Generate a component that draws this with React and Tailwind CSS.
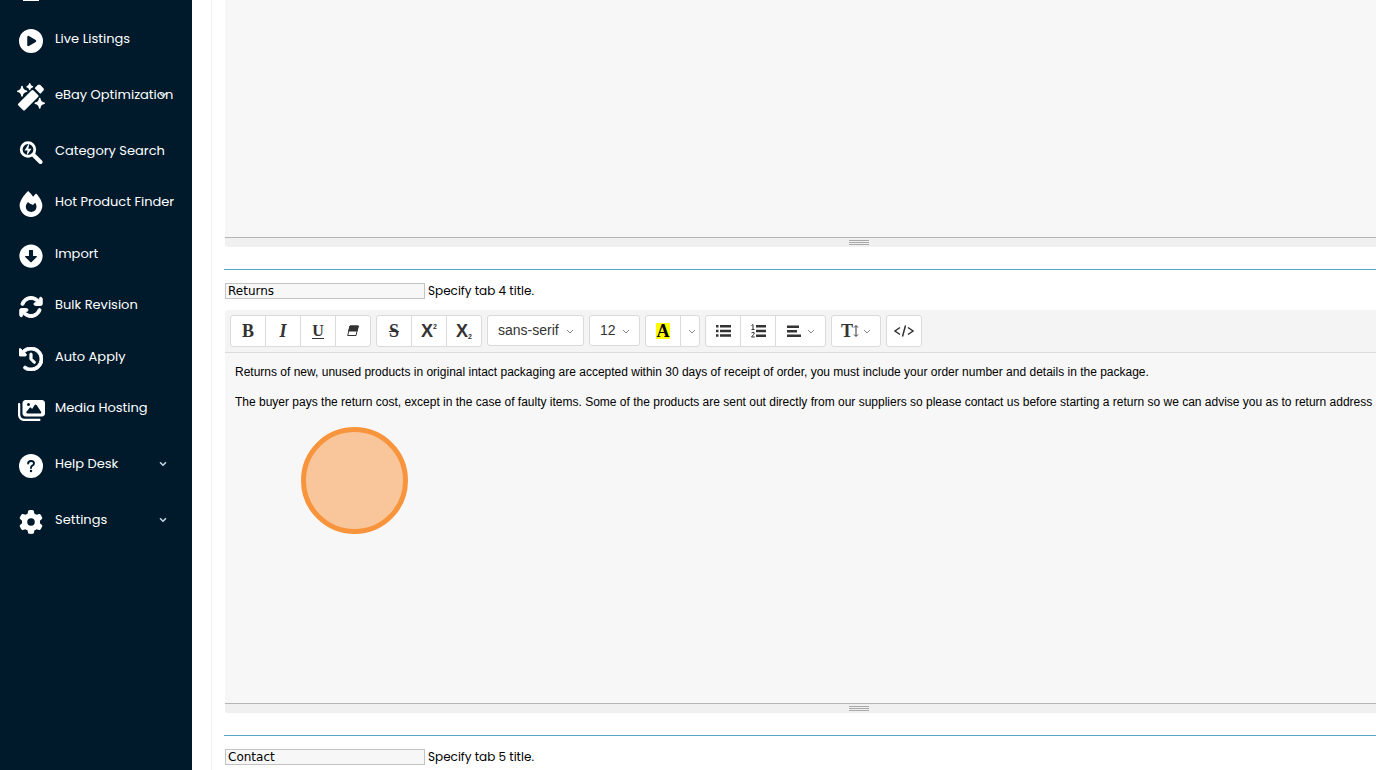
import React from 'react';
import {
  FaCirclePlay,
  FaArrowsRotate,
  FaClockRotateLeft,
  FaImages,
  FaGear,
} from 'react-icons/fa6';
import { FaArrowAltCircleDown } from 'react-icons/fa';
import { ChevronDown } from 'lucide-react';

const WandIcon = () => (
  <svg width="28" height="28" viewBox="0 0 28 28" fill="#fff" stroke="#fff" strokeLinejoin="round">
    <path d="M15.5 8.500L20 13L7 26L2.500 21.500Z" strokeWidth="3" />
    <path d="M18.800 5.200L21.300 2.700Q22 2.300 22.700 2.700L25.800 5.800Q26.200 6.400 25.800 7L23.300 9.700Z" strokeWidth="1.800" />
    <path d="M5 3.500Q5.500 7.500 9.500 8.300Q5.500 9 5 13Q4.500 9 0.800 8.300Q4.500 7.500 5 3.500Z" strokeWidth="1.600" />
    <path d="M12.700 0.800Q13 3.300 15.500 3.700Q13 4 12.700 6.500Q12.400 4 10 3.700Q12.400 3.300 12.700 0.800Z" strokeWidth="1.400" />
    <path d="M22.700 15.500Q23.200 19.500 27.200 20.200Q23.200 21 22.700 25Q22.200 21 18.300 20.200Q22.200 19.500 22.700 15.500Z" strokeWidth="1.600" />
  </svg>
);

const SearchIcon = () => (
  <svg width="24" height="24" viewBox="0 0 24 24" fill="none" stroke="#fff">
    <circle cx="9" cy="8.500" r="6.800" strokeWidth="2.800" />
    <path d="M14.500 14L21.500 21" strokeWidth="4" strokeLinecap="round" />
    <path d="M10.500 1.500L5.500 9.500H8.600L7.500 15L12.500 7.800H9.300Z" fill="#fff" stroke="none" />
  </svg>
);

const FlameIcon = () => (
  <svg width="24" height="26" viewBox="0 0 448 512" fill="#fff">
    <path
      fillRule="evenodd"
      d="M323.560 51.200c-20.800 19.300-39.580 39.590-56.220 59.970C240.080 73.620 206.280 35.530 168 0 69.740 91.170 0 209.960 0 281.600 0 408.850 100.290 512 224 512s224-103.150 224-230.400c0-53.270-51.980-163.140-124.440-230.400zM165 215C140 245 122 275 122 310C122 368 168 412 228 412C288 412 332 370 332 310C332 280 322 258 306 232L262 275C242 262 200 258 165 215z"
    />
  </svg>
);

const HelpIcon = () => (
  <svg width="24" height="24" viewBox="0 0 25 25" fill="none">
    <circle cx="12.500" cy="12.500" r="12.500" fill="#fff" />
    <path d="M9.500 10Q9.500 7.300 12.500 7.300Q15.600 7.300 15.600 9.800Q15.600 11.300 13.800 12.200Q12.500 12.900 12.500 14.600" stroke="#001a2c" strokeWidth="2" strokeLinecap="round" />
    <circle cx="12.500" cy="17.800" r="1.300" fill="#001a2c" />
  </svg>
);

const topLinks = [
  { label: 'Live Listings', icon: <FaCirclePlay size={24} /> },
  { label: 'eBay Optimization', icon: <WandIcon />, menu: true },
];

const toolLinks = [
  { label: 'Category Search', icon: <SearchIcon /> },
  { label: 'Hot Product Finder', icon: <FlameIcon /> },
  { label: 'Import', icon: <FaArrowAltCircleDown size={24} /> },
  { label: 'Bulk Revision', icon: <FaArrowsRotate size={24} stroke="#fff" strokeWidth={20} /> },
  { label: 'Auto Apply', icon: <FaClockRotateLeft size={24} stroke="#fff" strokeWidth={20} /> },
  { label: 'Media Hosting', icon: <FaImages size={27} /> },
];

const bottomLinks = [
  { label: 'Help Desk', icon: <HelpIcon />, menu: true },
  { label: 'Settings', icon: <FaGear size={24} />, menu: true },
];

const NavItem = ({ label, icon, menu, className }) => (
  <li className={className}>
    <a href="#" className="relative flex h-full items-center pl-4 text-white">
      <span className="flex w-[30px] shrink-0 justify-center">{icon}</span>
      <span className="whitespace-nowrap pb-1 pl-[9px] text-[13px] leading-5">{label}</span>
      {menu && (
        <span className="absolute right-6 flex pb-1 text-[#c3d3dd]">
          <ChevronDown size={10} strokeWidth={4} />
        </span>
      )}
    </a>
  </li>
);

const Sidebar = () => (
  <nav className="flex w-48 shrink-0 flex-col gap-0.5 bg-[#001a2c] font-['Poppins','Inter',sans-serif]">
    <div className="flex h-[11px] pl-[23px]">
      <span className="h-px w-4 bg-white" />
    </div>
    <ul>
      {topLinks.map((item) => (
        <NavItem key={item.label} {...item} className="h-14" />
      ))}
    </ul>
    <ul className="flex h-[309px] flex-col">
      {toolLinks.map((item) => (
        <NavItem key={item.label} {...item} className="flex-1" />
      ))}
    </ul>
    <ul>
      {bottomLinks.map((item) => (
        <NavItem key={item.label} {...item} className="h-14" />
      ))}
    </ul>
  </nav>
);

const Caret = () => (
  <svg width="8" height="8" viewBox="0 0 8 8" fill="none" stroke="#888" strokeWidth="1">
    <path d="M1 3 L4 6 L7 3" />
  </svg>
);

// neighbouring buttons share one border
const Group = ({ children }) => <div className="flex h-8 pl-px">{children}</div>;

const ToolButton = ({ label, className = 'w-9', children }) => (
  <button
    type="button"
    aria-label={label}
    className={`${className} -ml-px flex items-center justify-center border border-[#dadada] bg-white first:rounded-l-[3px] last:rounded-r-[3px]`}
  >
    {children}
  </button>
);

const ToolSelect = ({ label, value, className }) => (
  <div className="relative flex h-[31px] items-center">
    <select
      aria-label={label}
      defaultValue={value}
      className={`${className} h-[31px] appearance-none rounded-[3px] border border-[#dadada] bg-white pb-px pl-2.5 text-sm text-[#333] outline-none`}
    >
      <option>{value}</option>
    </select>
    <span className="pointer-events-none absolute right-2.5">
      <Caret />
    </span>
  </div>
);

const Toolbar = () => (
  <div className="flex gap-[5px] rounded-t-[3px] border-b border-[#dcdcdc] bg-[#f4f4f4] p-[5px] font-['Liberation_Sans',Arial,sans-serif] text-[#333]">
    <Group>
      <ToolButton label="Bold">
        <span className="font-['Liberation_Serif',serif] text-lg font-bold leading-5">B</span>
      </ToolButton>
      <ToolButton label="Italic">
        <span className="font-['Liberation_Serif',serif] text-lg font-bold italic leading-5">I</span>
      </ToolButton>
      <ToolButton label="Underline">
        <span className="border-b border-[#333] font-['Liberation_Serif',serif] text-base font-bold leading-[14px]">U</span>
      </ToolButton>
      <ToolButton label="Remove formatting">
        <svg width="12" height="12" viewBox="0 0 12 12">
          <path d="M3 1 H11.300 L9 10.500 H0.700 Z" fill="#fff" stroke="#333" strokeLinejoin="round" />
          <path d="M3 1 H11.300 L10 6 H1.800 Z" fill="#333" stroke="#333" strokeLinejoin="round" />
        </svg>
      </ToolButton>
    </Group>
    <Group>
      <ToolButton label="Strikethrough">
        <span className="font-['Liberation_Serif',serif] text-lg font-bold leading-5 line-through">S</span>
      </ToolButton>
      <ToolButton label="Superscript">
        <span className="text-lg font-bold leading-5">X</span>
        <span className="pb-2 text-[7px] font-bold leading-3">2</span>
      </ToolButton>
      <ToolButton label="Subscript">
        <span className="text-lg font-bold leading-5">X</span>
        <span className="pt-3 text-[7px] font-bold leading-3">2</span>
      </ToolButton>
    </Group>
    <ToolSelect label="Font family" value="sans-serif" className="w-[97px]" />
    <ToolSelect label="Font size" value="12" className="w-[51px]" />
    <Group>
      <ToolButton label="Highlight colour">
        <span className="w-3.5 bg-[#ffff00] text-center font-['Liberation_Serif',serif] text-lg font-bold leading-4 text-black">A</span>
      </ToolButton>
      <ToolButton label="More colours" className="w-5 pl-1">
        <Caret />
      </ToolButton>
    </Group>
    <Group>
      <ToolButton label="Bulleted list">
        <svg width="15" height="12" viewBox="0 0 15 12" fill="#333">
          <path d="M0 0h2.500v2.500H0zM0 4.700h2.500v2.500H0zM0 9.300h2.500v2.500H0zM4 0H15v2.500H4zM4 4.700H15v2.500H4zM4 9.300H15v2.500H4z" />
        </svg>
      </ToolButton>
      <ToolButton label="Numbered list">
        <svg width="15" height="14" viewBox="0 0 15 14" fill="#333">
          <path d="M5 1h10v2.600H5zM5 5.700h10v2.600H5zM5 10.400h10v2.600H5z" />
          <path d="M0.500 1.500 L2 0.500 V5.500 M0.500 5.500 H3.500 M0.500 9 Q2 7.500 3.300 8.800 Q3.500 10 0.500 13 H3.800" fill="none" stroke="#333" />
        </svg>
      </ToolButton>
      <ToolButton label="Alignment" className="w-[51px] gap-1.5">
        <svg width="14" height="12" viewBox="0 0 14 12" fill="#333">
          <path d="M0 0.500h12v2.500H0zM0 5h10v2.500H0zM0 9.500h14v2.500H0z" />
        </svg>
        <Caret />
      </ToolButton>
    </Group>
    <Group>
      <ToolButton label="Line height" className="w-[50px] gap-1">
        <span className="flex items-center">
          <span className="font-['Liberation_Serif',serif] text-lg font-bold leading-5">T</span>
          <svg width="6" height="12" viewBox="0 0 6 12" fill="none" stroke="#333">
            <path d="M3 1V11M1 2.500L3 0.500L5 2.500M1 9.500L3 11.500L5 9.500" />
          </svg>
        </span>
        <Caret />
      </ToolButton>
    </Group>
    <Group>
      <ToolButton label="Code view">
        <svg width="20" height="12" viewBox="0 0 20 12" fill="none" stroke="#333" strokeWidth="1.500">
          <path d="M6 2.500L1 6L6 9.500M11.500 0.500L8.500 11.500M14 2.500L19 6L14 9.500" />
        </svg>
      </ToolButton>
    </Group>
  </div>
);

const ResizeBar = () => (
  <div className="flex h-2.5 cursor-ns-resize flex-col items-center gap-px rounded-b-[3px] border-t border-[#b5b5b5] bg-[#f0f0f0] pt-0.5">
    <span className="h-px w-5 bg-[#a9a9a9]" />
    <span className="h-px w-5 bg-[#a9a9a9]" />
    <span className="h-px w-5 bg-[#a9a9a9]" />
  </div>
);

const TabTitle = ({ number, value }) => (
  <div className="mt-[22px] border-t border-t-[#55a6c4] pl-px pt-[13px]">
    <div className="flex h-4 items-center gap-[3px]">
      <input
        id={`tab-${number}`}
        type="text"
        defaultValue={value}
        className="h-4 w-[200px] border border-[#c3c3c3] bg-[#f7f7f7] px-0.5 font-['DejaVu_Sans',sans-serif] text-xs leading-[14px] text-black outline-none"
      />
      <label htmlFor={`tab-${number}`} className="font-['Poppins','Inter',sans-serif] text-xs leading-4 text-black">
        Specify tab {number} title.
      </label>
    </div>
  </div>
);

const App = () => {
  return (
    <div className="flex h-screen overflow-hidden bg-white">
      <Sidebar />
      <main className="ml-[19px] min-w-0 flex-1 overflow-hidden border-l border-[#f0f0f0] pl-3">
        {/* the editors run past the right edge of the window */}
        <div className="-mr-[116px]">
          <div className="ml-px">
            <div className="h-[237px] bg-[#f7f7f7]" />
            <ResizeBar />
          </div>

          <TabTitle number={4} value="Returns" />
          <div className="ml-px mt-[11px]">
            <Toolbar />
            <div className="relative h-[350px] bg-[#f7f7f7] pl-2.5 pt-3 font-['Liberation_Sans',Arial,sans-serif] text-xs leading-[15px] text-black">
              <p className="mb-[15px] whitespace-nowrap">
                Returns of new, unused products in original intact packaging are accepted within 30 days of receipt of order, you must include your order number and details in the package.
              </p>
              <p className="whitespace-nowrap">
                The buyer pays the return cost, except in the case of faulty items. Some of the products are sent out directly from our suppliers so please contact us before starting a return so we can advise you as to return address
              </p>
              <span className="absolute left-[76px] top-[74px] size-[107px] rounded-full border-5 border-[#f8943c] bg-[#f9c69b]" />
            </div>
            <ResizeBar />
          </div>

          <TabTitle number={5} value="Contact" />
        </div>
      </main>
    </div>
  );
};

export default App;
